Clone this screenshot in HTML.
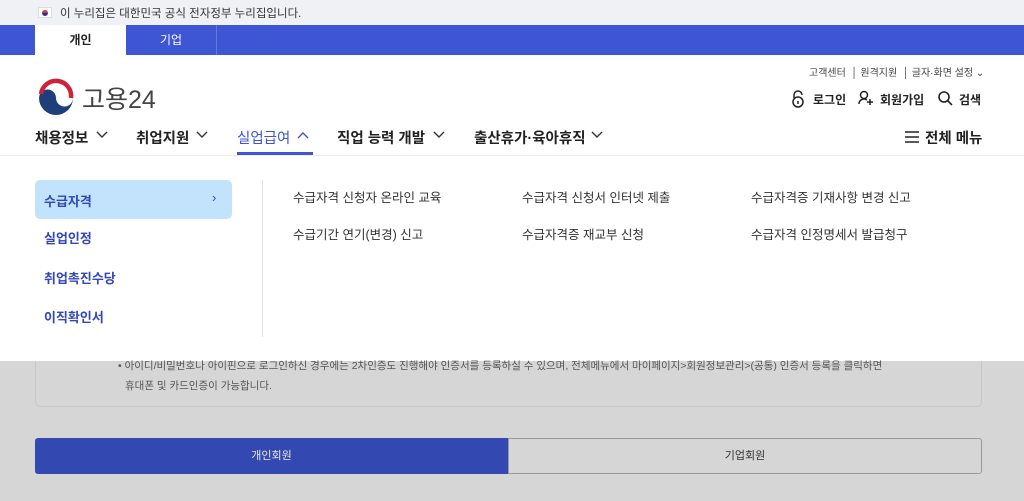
<!DOCTYPE html>
<html><head><meta charset="utf-8">
<style>
*{margin:0;padding:0;box-sizing:border-box}
body{width:1024px;height:501px;overflow:hidden;background:#d6d6d6;font-family:"Liberation Sans","Noto Sans CJK KR",sans-serif;position:relative;color:#222}
.a{position:absolute;white-space:nowrap}
.n{position:absolute;top:127px;font-size:14.5px;font-weight:bold;color:#222;white-space:nowrap}
.cv{position:absolute;top:131px}
</style></head><body>
<div class="a" style="left:0;top:0;width:1024px;height:25px;background:#f0f1f4"></div>
<div class="a" style="left:38px;top:7px;width:14px;height:11px;background:#fff;border:1px solid #ddd"><div style="margin:2px auto;width:6px;height:6px;border-radius:50%;background:linear-gradient(#d33 50%,#23a 50%)"></div></div>
<div class="a" style="left:60px;top:5px;font-size:11.5px;color:#333">이 누리집은 대한민국 공식 전자정부 누리집입니다.</div>
<div class="a" style="left:0;top:25px;width:1024px;height:30px;background:#3e55d4"></div>
<div class="a" style="left:35px;top:25px;width:91px;height:30px;background:#fff;text-align:center;line-height:30px;font-size:12px;font-weight:bold">개인</div>
<div class="a" style="left:126px;top:25px;width:91px;height:30px;color:#fff;text-align:center;line-height:30px;font-size:12px;border-right:1px solid #6577dd">기업</div>
<div class="a" style="left:0;top:55px;width:1024px;height:100px;background:#fff"></div>
<svg class="a" style="left:36px;top:77px" width="40" height="40" viewBox="0 0 40 40"><circle cx="20" cy="21" r="17" fill="#1f3f7a"/><path d="M3 21a8.5 8.5 0 0 1 17 0a8.5 8.5 0 0 0 17 0V4H3z" fill="#fff"/><path d="M5 17a15 15 0 0 1 30 4" stroke="#d0213a" stroke-width="4.5" fill="none"/><circle cx="20" cy="21" r="17" fill="none" stroke="#fff" stroke-width="0"/></svg>
<div class="a" style="left:82px;top:80px;font-size:25px;color:#444">고용24</div>
<div class="a" style="left:809px;top:64px;font-size:10px;color:#444">고객센터 &nbsp;│ 원격지원 &nbsp;│ 글자·화면 설정 ⌄</div>
<svg class="a" style="left:791px;top:90px" width="14" height="18" viewBox="0 0 14 18" fill="none" stroke="#222" stroke-width="1.5"><path d="M3 8V5a4 4 0 0 1 8 0"/><circle cx="7" cy="12" r="5"/><path d="M7 11v3"/></svg>
<div class="a" style="left:813px;top:91px;font-size:12px;font-weight:bold">로그인</div>
<svg class="a" style="left:858px;top:90px" width="16" height="16" viewBox="0 0 16 16" fill="none" stroke="#222" stroke-width="1.5"><circle cx="6" cy="5" r="3.5"/><path d="M1 14a5 5 0 0 1 8-4M12 9v6M9 12h6"/></svg>
<div class="a" style="left:880px;top:91px;font-size:12px;font-weight:bold">회원가입</div>
<svg class="a" style="left:937px;top:90px" width="16" height="16" viewBox="0 0 16 16" fill="none" stroke="#222" stroke-width="1.6"><circle cx="7" cy="7" r="5"/><path d="M11 11l4 4"/></svg>
<div class="a" style="left:959px;top:91px;font-size:12px;font-weight:bold">검색</div>
<svg class="a" style="left:905px;top:131px" width="14" height="12" viewBox="0 0 14 12" stroke="#222" stroke-width="1.6"><path d="M0 1h14M0 6h14M0 11h14"/></svg>
<div class="a" style="left:925px;top:127px;font-size:14.5px;font-weight:bold">전체 메뉴</div>
<div class="n" style="left:35px">채용정보</div><svg class="cv" style="left:96px" width="12" height="8" viewBox="0 0 12 8" fill="none" stroke="#333" stroke-width="1.4"><path d="M1 1l5 5 5-5"/></svg>
<div class="n" style="left:136px">취업지원</div><svg class="cv" style="left:196px" width="12" height="8" viewBox="0 0 12 8" fill="none" stroke="#333" stroke-width="1.4"><path d="M1 1l5 5 5-5"/></svg>
<div class="n" style="left:237px;color:#3e55d4;font-weight:normal">실업급여</div><svg class="cv" style="left:297px" width="12" height="8" viewBox="0 0 12 8" fill="none" stroke="#3e55d4" stroke-width="1.4"><path d="M1 7l5-5 5 5"/></svg>
<div class="a" style="left:237px;top:152px;width:76px;height:3px;background:#3e55d4"></div>
<div class="n" style="left:337px">직업 능력 개발</div><svg class="cv" style="left:433px" width="12" height="8" viewBox="0 0 12 8" fill="none" stroke="#333" stroke-width="1.4"><path d="M1 1l5 5 5-5"/></svg>
<div class="n" style="left:474px">출산휴가·육아휴직</div><svg class="cv" style="left:591px" width="12" height="8" viewBox="0 0 12 8" fill="none" stroke="#333" stroke-width="1.4"><path d="M1 1l5 5 5-5"/></svg>
<div class="a" style="left:0;top:155px;width:1024px;height:206px;background:#fff;border-top:1px solid #eee"></div>
<div class="a" style="left:35px;top:180px;width:197px;height:39px;background:#c3e2fc;border-radius:5px"></div>
<div class="a" style="left:44px;top:191px;font-size:13px;font-weight:bold;color:#3348b8">수급자격</div>
<div class="a" style="left:212px;top:190px;font-size:13px;color:#3348b8">›</div>
<div class="a" style="left:44px;top:219px;font-size:13px;font-weight:bold;color:#3348b8;line-height:39.5px">실업인정<br>취업촉진수당<br>이직확인서</div>
<div class="a" style="left:262px;top:180px;width:1px;height:157px;background:#e4e4e4"></div>
<div class="a" style="left:293px;top:180px;font-size:12.5px;color:#333;line-height:37px">수급자격 신청자 온라인 교육<br>수급기간 연기(변경) 신고</div>
<div class="a" style="left:522px;top:180px;font-size:12.5px;color:#333;line-height:37px">수급자격 신청서 인터넷 제출<br>수급자격증 재교부 신청</div>
<div class="a" style="left:751px;top:180px;font-size:12.5px;color:#333;line-height:37px">수급자격증 기재사항 변경 신고<br>수급자격 인정명세서 발급청구</div>
<div class="a" style="left:35px;top:361px;width:947px;height:46px;border:1px solid #c8c8c8;border-top:none;border-radius:0 0 5px 5px"></div>
<div class="a" style="left:118px;top:358px;font-size:10.5px;color:#555">• 아이디/비밀번호나 아이핀으로 로그인하신 경우에는 2차인증도 진행해야 인증서를 등록하실 수 있으며, 전체메뉴에서 마이페이지&gt;회원정보관리&gt;(공통) 인증서 등록을 클릭하면</div>
<div class="a" style="left:125px;top:378px;font-size:10.5px;color:#555">휴대폰 및 카드인증이 가능합니다.</div>
<div class="a" style="left:35px;top:438px;width:473px;height:36px;background:#3348b0;border-radius:3px 0 0 3px;color:#e8e8e8;font-size:11px;text-align:center;line-height:36px">개인회원</div>
<div class="a" style="left:508px;top:438px;width:474px;height:36px;border:1px solid #999;border-radius:0 3px 3px 0;color:#333;font-size:11px;text-align:center;line-height:34px">기업회원</div>
</body></html>
